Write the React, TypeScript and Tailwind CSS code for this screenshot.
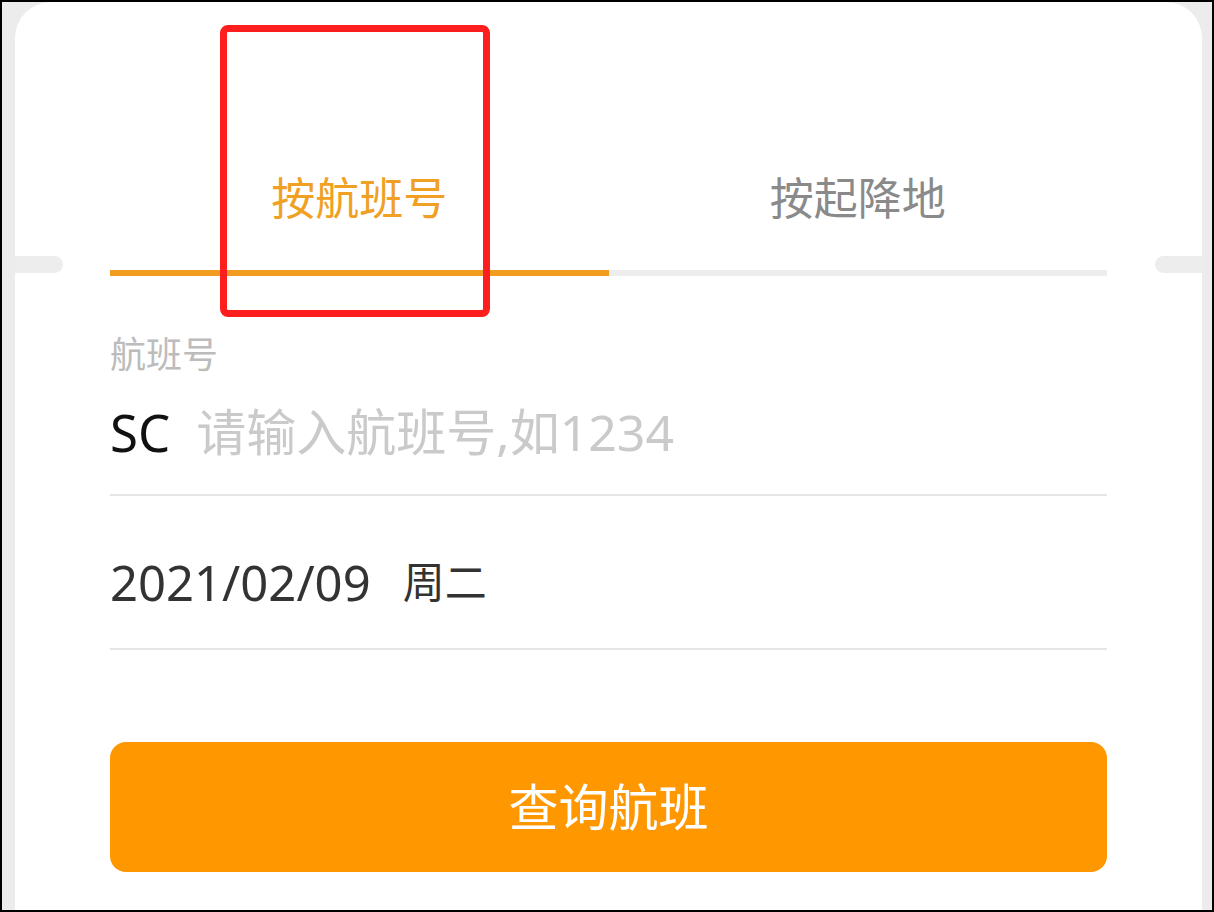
import { useState } from 'react';

const FONT = { fontFamily: '"Noto Sans", "Noto Sans CJK SC", sans-serif' };

export default function App() {
  const [tab, setTab] = useState(0);
  const [flightNo, setFlightNo] = useState('');

  return (
    <div
      className="relative w-[1214px] h-[912px] overflow-hidden border-2 border-black bg-[#ececec] pl-[13px] pr-[10px]"
      style={FONT}
    >
      {/* card */}
      <div className="h-full bg-white rounded-t-[36px] px-[95px]">
        {/* tabs */}
        <div className="flex pt-[163px] pb-[39px]">
          {['按航班号', '按起降地'].map((label, i) => (
            <button
              key={label}
              type="button"
              onClick={() => setTab(i)}
              className={`flex-1 text-center text-[44px] leading-[66px] ${
                tab === i ? 'text-[#f0a023]' : 'text-[#8a8a8a]'
              }`}
            >
              {label}
            </button>
          ))}
        </div>
        <div className="flex h-[6px] bg-[#ededed]">
          <div className={`w-1/2 h-full ${tab === 0 ? 'bg-[#f29c1f]' : 'bg-transparent'}`}></div>
          <div className={`w-1/2 h-full ${tab === 1 ? 'bg-[#f29c1f]' : 'bg-transparent'}`}></div>
        </div>

        {/* flight number */}
        <div className="mt-[57px] text-[36px] leading-[44px] text-[#bcbcbc]">航班号</div>
        <div className="mt-[24px] flex items-center h-[62px]">
          <span className="text-[51px] leading-[62px] text-[#111111]">SC</span>
          <input
            value={flightNo}
            onChange={(e) => setFlightNo(e.target.value)}
            placeholder="请输入航班号,如1234"
            className="ml-[26px] flex-1 text-[50px] leading-[62px] text-[#111111] placeholder:text-[#cacaca] outline-none bg-transparent"
            style={FONT}
          />
        </div>
        <div className="mt-[31px] h-[2px] bg-[#e5e5e5]"></div>

        {/* date */}
        <div className="mt-[55px] flex items-center h-[62px] text-[#333333]">
          <span className="text-[49px] leading-[62px]">2021/02/09</span>
          <span className="ml-[32px] text-[42px] leading-[62px]">周二</span>
        </div>
        <div className="mt-[35px] h-[2px] bg-[#e5e5e5]"></div>

        {/* submit */}
        <button
          type="button"
          className="mt-[92px] w-full h-[130px] rounded-[16px] bg-[#fe9700] text-white text-[50px]"
        >
          查询航班
        </button>
      </div>

      {/* side pills */}
      <div className="absolute left-[13px] top-[254px] w-[48px] h-[17px] rounded-r-full bg-[#ededed]"></div>
      <div className="absolute right-[10px] top-[254px] w-[47px] h-[17px] rounded-l-full bg-[#ededed]"></div>

      {/* annotation box */}
      <div className="absolute left-[218px] top-[23px] w-[270px] h-[292px] border-[7px] border-[#ff1e1e] rounded-[8px] pointer-events-none"></div>
    </div>
  );
}
